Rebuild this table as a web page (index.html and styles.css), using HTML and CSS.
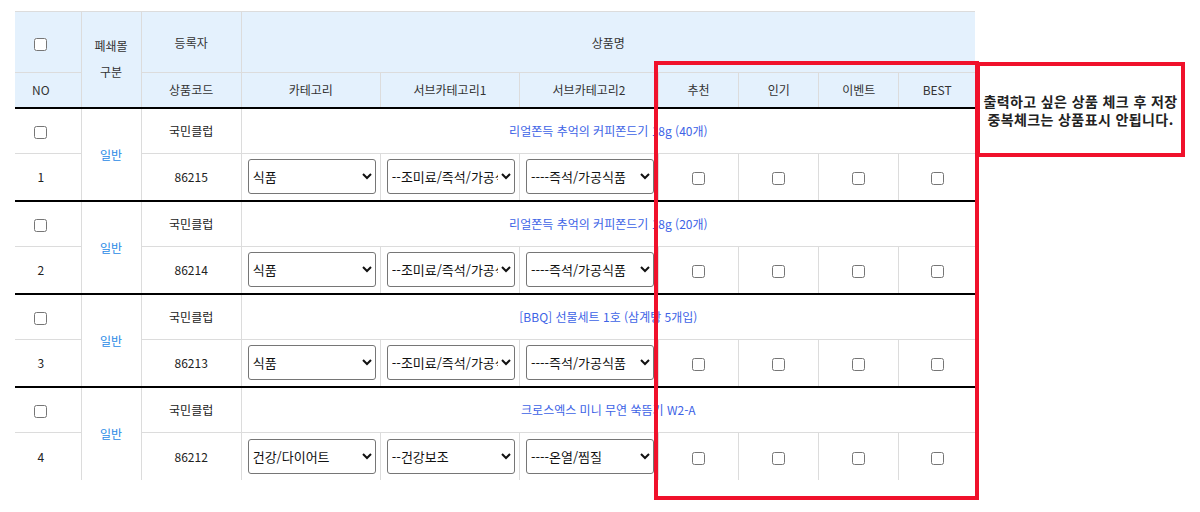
FILE: index.html
```html
<!DOCTYPE html>
<html lang="ko">
<head>
    <meta charset="UTF-8" />
    <meta name="viewport" content="width=device-width, initial-scale=1.0" />
    <title>상품 진열 관리</title>
    <link rel="stylesheet" href="styles.css">
</head>
<body>
    <table class="goods-table">
        <colgroup>
            <col class="w-no">
            <col class="w-mall">
            <col class="w-code">
            <col class="w-cate">
            <col class="w-cate">
            <col class="w-cate">
            <col class="w-flag">
            <col class="w-flag">
            <col class="w-flag">
            <col class="w-best">
        </colgroup>
        <thead>
            <tr class="head-top">
                <th class="col-no"><input type="checkbox"></th>
                <th rowspan="2" class="mall-head">폐쇄몰<br>구분</th>
                <th>등록자</th>
                <th colspan="7">상품명</th>
            </tr>
            <tr class="head-bottom">
                <th class="col-no">NO</th>
                <th>상품코드</th>
                <th>카테고리</th>
                <th>서브카테고리1</th>
                <th>서브카테고리2</th>
                <th>추천</th>
                <th>인기</th>
                <th>이벤트</th>
                <th>BEST</th>
            </tr>
        </thead>
        <tbody>
            <!-- 1 -->
            <tr class="item-top">
                <td class="col-no"><input type="checkbox"></td>
                <td rowspan="2" class="mall">일반</td>
                <td>국민클럽</td>
                <td colspan="7"><a href="#" class="goods-name">리얼쫀득 추억의 커피쫀드기 18g (40개)</a></td>
            </tr>
            <tr class="item-bottom">
                <td class="col-no">1</td>
                <td>86215</td>
                <td class="sel"><select><option>식품</option></select></td>
                <td class="sel"><select><option>--조미료/즉석/가공식품</option></select></td>
                <td class="sel"><select><option>----즉석/가공식품</option></select></td>
                <td><input type="checkbox"></td>
                <td><input type="checkbox"></td>
                <td><input type="checkbox"></td>
                <td><input type="checkbox"></td>
            </tr>
            <!-- 2 -->
            <tr class="item-top">
                <td class="col-no"><input type="checkbox"></td>
                <td rowspan="2" class="mall">일반</td>
                <td>국민클럽</td>
                <td colspan="7"><a href="#" class="goods-name">리얼쫀득 추억의 커피쫀드기 18g (20개)</a></td>
            </tr>
            <tr class="item-bottom">
                <td class="col-no">2</td>
                <td>86214</td>
                <td class="sel"><select><option>식품</option></select></td>
                <td class="sel"><select><option>--조미료/즉석/가공식품</option></select></td>
                <td class="sel"><select><option>----즉석/가공식품</option></select></td>
                <td><input type="checkbox"></td>
                <td><input type="checkbox"></td>
                <td><input type="checkbox"></td>
                <td><input type="checkbox"></td>
            </tr>
            <!-- 3 -->
            <tr class="item-top">
                <td class="col-no"><input type="checkbox"></td>
                <td rowspan="2" class="mall">일반</td>
                <td>국민클럽</td>
                <td colspan="7"><a href="#" class="goods-name">[BBQ] 선물세트 1호 (삼계탕 5개입)</a></td>
            </tr>
            <tr class="item-bottom">
                <td class="col-no">3</td>
                <td>86213</td>
                <td class="sel"><select><option>식품</option></select></td>
                <td class="sel"><select><option>--조미료/즉석/가공식품</option></select></td>
                <td class="sel"><select><option>----즉석/가공식품</option></select></td>
                <td><input type="checkbox"></td>
                <td><input type="checkbox"></td>
                <td><input type="checkbox"></td>
                <td><input type="checkbox"></td>
            </tr>
            <!-- 4 -->
            <tr class="item-top">
                <td class="col-no"><input type="checkbox"></td>
                <td rowspan="2" class="mall last">일반</td>
                <td>국민클럽</td>
                <td colspan="7"><a href="#" class="goods-name">크로스엑스 미니 무연 쑥뜸기 W2-A</a></td>
            </tr>
            <tr class="item-bottom last">
                <td class="col-no">4</td>
                <td>86212</td>
                <td class="sel"><select><option>건강/다이어트</option></select></td>
                <td class="sel"><select><option>--건강보조</option></select></td>
                <td class="sel"><select><option>----온열/찜질</option></select></td>
                <td><input type="checkbox"></td>
                <td><input type="checkbox"></td>
                <td><input type="checkbox"></td>
                <td><input type="checkbox"></td>
            </tr>
        </tbody>
    </table>

    <!-- 표시 영역 안내 -->
    <div class="mark-box"></div>
    <div class="mark-note">출력하고 싶은 상품 체크 후 저장<br>중복체크는 상품표시 안됩니다.</div>
</body>
</html>
```

FILE: styles.css
```css
:root {
    --head-bg: #e4f1fd;
    --line: #dcdcdc;
    --text: #222;
    --link: #3d63e6;
    --mall: #2a8ae6;
    --mark: #f0112b;
}

* {
    box-sizing: border-box;
}

body {
    margin: 0;
    padding: 11px 15px;
    min-height: 512px;
    position: relative;
    font-family: "Noto Sans CJK KR", "Noto Sans", sans-serif;
    font-size: 12px;
    color: var(--text);
    background-color: #fff;
}

.goods-table {
    width: 960px;
    border-collapse: collapse;
    table-layout: fixed;
}

.w-no { width: 66px; }
.w-mall { width: 60px; }
.w-code { width: 100px; }
.w-cate { width: 139px; }
.w-flag { width: 80px; }
.w-best { width: 76px; }

.goods-table th,
.goods-table td {
    border: 1px solid var(--line);
    padding: 0;
    text-align: center;
    vertical-align: middle;
    font-weight: normal;
}

.goods-table tr > :first-child {
    border-left: 0;
}

.goods-table tr > :last-child {
    border-right: 0;
}

.goods-table th {
    background-color: var(--head-bg);
    color: #333;
}

.head-top th {
    height: 61px;
}

.head-bottom th {
    height: 35px;
    border-bottom: 2px solid #000;
}

.mall-head {
    line-height: 26px;
    border-bottom: 2px solid #000;
}

.col-no {
    padding-right: 14px !important;
}

.item-top td {
    height: 46px;
    border-top: 2px solid #000;
}

.item-bottom td {
    height: 47px;
}

.item-bottom.last td,
.mall.last {
    border-bottom: 0;
}

.mall {
    color: var(--mall);
    font-weight: bold;
}

.goods-name {
    color: var(--link);
    text-decoration: none;
}

input[type="checkbox"] {
    margin: 0;
    vertical-align: middle;
}

.sel {
    padding: 0 6px !important;
}

.sel select {
    width: 128px;
    height: 35px;
    border: 1px solid #767676;
    border-radius: 3px;
    font-family: inherit;
    font-size: 13px;
    color: #111;
    background-color: #fff;
}

.mark-box {
    position: absolute;
    left: 654px;
    top: 61px;
    width: 325px;
    height: 439px;
    border: 4px solid var(--mark);
}

.mark-note {
    position: absolute;
    left: 976px;
    top: 62px;
    width: 209px;
    height: 95px;
    border: 4px solid var(--mark);
    display: flex;
    align-items: center;
    justify-content: center;
    text-align: center;
    font-size: 14px;
    font-weight: bold;
    letter-spacing: 0.4px;
    line-height: 18px;
    color: #222;
}
```
